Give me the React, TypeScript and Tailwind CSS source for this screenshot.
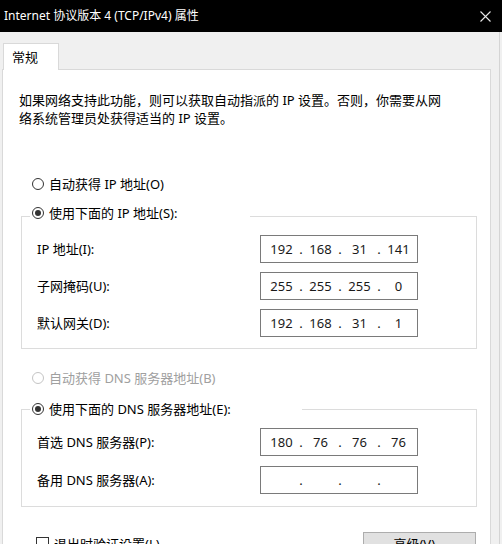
import React from "react";

// Windows-style IPv4 property sheet (常规 tab)

type RadioProps = { label: string; checked?: boolean; disabled?: boolean };

function Radio({ label, checked = false, disabled = false }: RadioProps) {
  return (
    <div className="flex h-[20px] items-center gap-[5px]">
      <span
        className={`flex h-[12px] w-[12px] items-center justify-center rounded-full border bg-white ${
          disabled ? "border-[#c4c4c4]" : "border-[#333333]"
        }`}
      >
        {checked && <span className="h-[6px] w-[6px] rounded-full bg-[#333333]" />}
      </span>
      <span className={disabled ? "text-[#a0a0a0]" : "text-black"}>{label}</span>
    </div>
  );
}

function IpField({ parts }: { parts: string[] }) {
  return (
    <div className="flex h-[28px] w-[158px] items-center border border-[#7a7a7a] bg-white pl-[4px] text-[#1a1a1a]">
      {parts.map((p, i) => (
        <React.Fragment key={i}>
          {i > 0 && <span className="w-[6px] text-center">.</span>}
          <span className="w-[33px] text-center">{p}</span>
        </React.Fragment>
      ))}
    </div>
  );
}

function Row({ label, parts }: { label: string; parts: string[] }) {
  return (
    <div className="flex items-center">
      <span className="w-[223px]">{label}</span>
      <IpField parts={parts} />
    </div>
  );
}

export default function App() {
  return (
    <div className="h-[544px] w-[502px] overflow-hidden bg-[#f0f0f0] font-['Noto_Sans','Noto_Sans_CJK_SC',sans-serif] text-[13px] leading-[18px] text-black">
      {/* title bar */}
      <div className="flex h-[32px] items-center justify-between bg-black pl-[4px] pr-[10px] text-[12px] text-white">
        <span>Internet 协议版本 4 (TCP/IPv4) 属性</span>
        <svg width="11" height="11" viewBox="0 0 11 11" className="mr-[1px]">
          <path d="M0.5 0.5 L10.5 10.5 M10.5 0.5 L0.5 10.5" stroke="#e8e8e8" strokeWidth="1.1" />
        </svg>
      </div>

      <div className="h-[512px] w-[500px] border-r border-[#d4d4d4]">
        {/* tab strip */}
        <div className="flex h-[38px] items-end pl-[3px]">
          <div className="relative z-10 flex h-[27px] w-[56px] items-center border border-b-0 border-[#d9d9d9] bg-white pl-[8px]">
            常规
          </div>
        </div>

        {/* panel */}
        <div className="-mt-px ml-[2px] h-[480px] w-[489px] border border-[#d9d9d9] bg-white pl-[16px] pt-[21px]">
          <p>
            如果网络支持此功能，则可以获取自动指派的 IP 设置。否则，你需要从网
            <br />
            络系统管理员处获得适当的 IP 设置。
          </p>

          <div className="ml-[13px] mt-[47px]">
            <Radio label="自动获得 IP 地址(O)" />
          </div>

          <fieldset className="ml-[2px] mt-[9px] w-[456px] border border-[#dcdcdc] pb-[11px] pl-[15px] pt-[6px]">
            <legend className="-ml-[7px] w-[220px] pb-[6px] pl-[2px]">
              <Radio label="使用下面的 IP 地址(S):" checked />
            </legend>
            <div className="flex flex-col gap-[9px]">
              <Row label="IP 地址(I):" parts={["192", "168", "31", "141"]} />
              <Row label="子网掩码(U):" parts={["255", "255", "255", "0"]} />
              <Row label="默认网关(D):" parts={["192", "168", "31", "1"]} />
            </div>
          </fieldset>

          <div className="ml-[13px] mt-[19px]">
            <Radio label="自动获得 DNS 服务器地址(B)" disabled />
          </div>

          <fieldset className="ml-[2px] mt-[11px] w-[456px] border border-[#dcdcdc] pb-[12px] pl-[15px] pt-[9px]">
            <legend className="-ml-[7px] w-[272px] pl-[2px]">
              <Radio label="使用下面的 DNS 服务器地址(E):" checked />
            </legend>
            <div className="flex flex-col gap-[10px]">
              <Row label="首选 DNS 服务器(P):" parts={["180", "76", "76", "76"]} />
              <Row label="备用 DNS 服务器(A):" parts={["", "", "", ""]} />
            </div>
          </fieldset>

          <div className="mt-[25px] flex w-[457px] items-center justify-between">
            <div className="ml-[17px] flex items-center gap-[5px]">
              <span className="h-[13px] w-[13px] border border-[#333333] bg-white" />
              <span>退出时验证设置(L)</span>
            </div>
            <button className="flex h-[23px] w-[113px] items-center justify-center border border-[#adadad] bg-[#e1e1e1]">
              高级(V)...
            </button>
          </div>
        </div>
      </div>
    </div>
  );
}
